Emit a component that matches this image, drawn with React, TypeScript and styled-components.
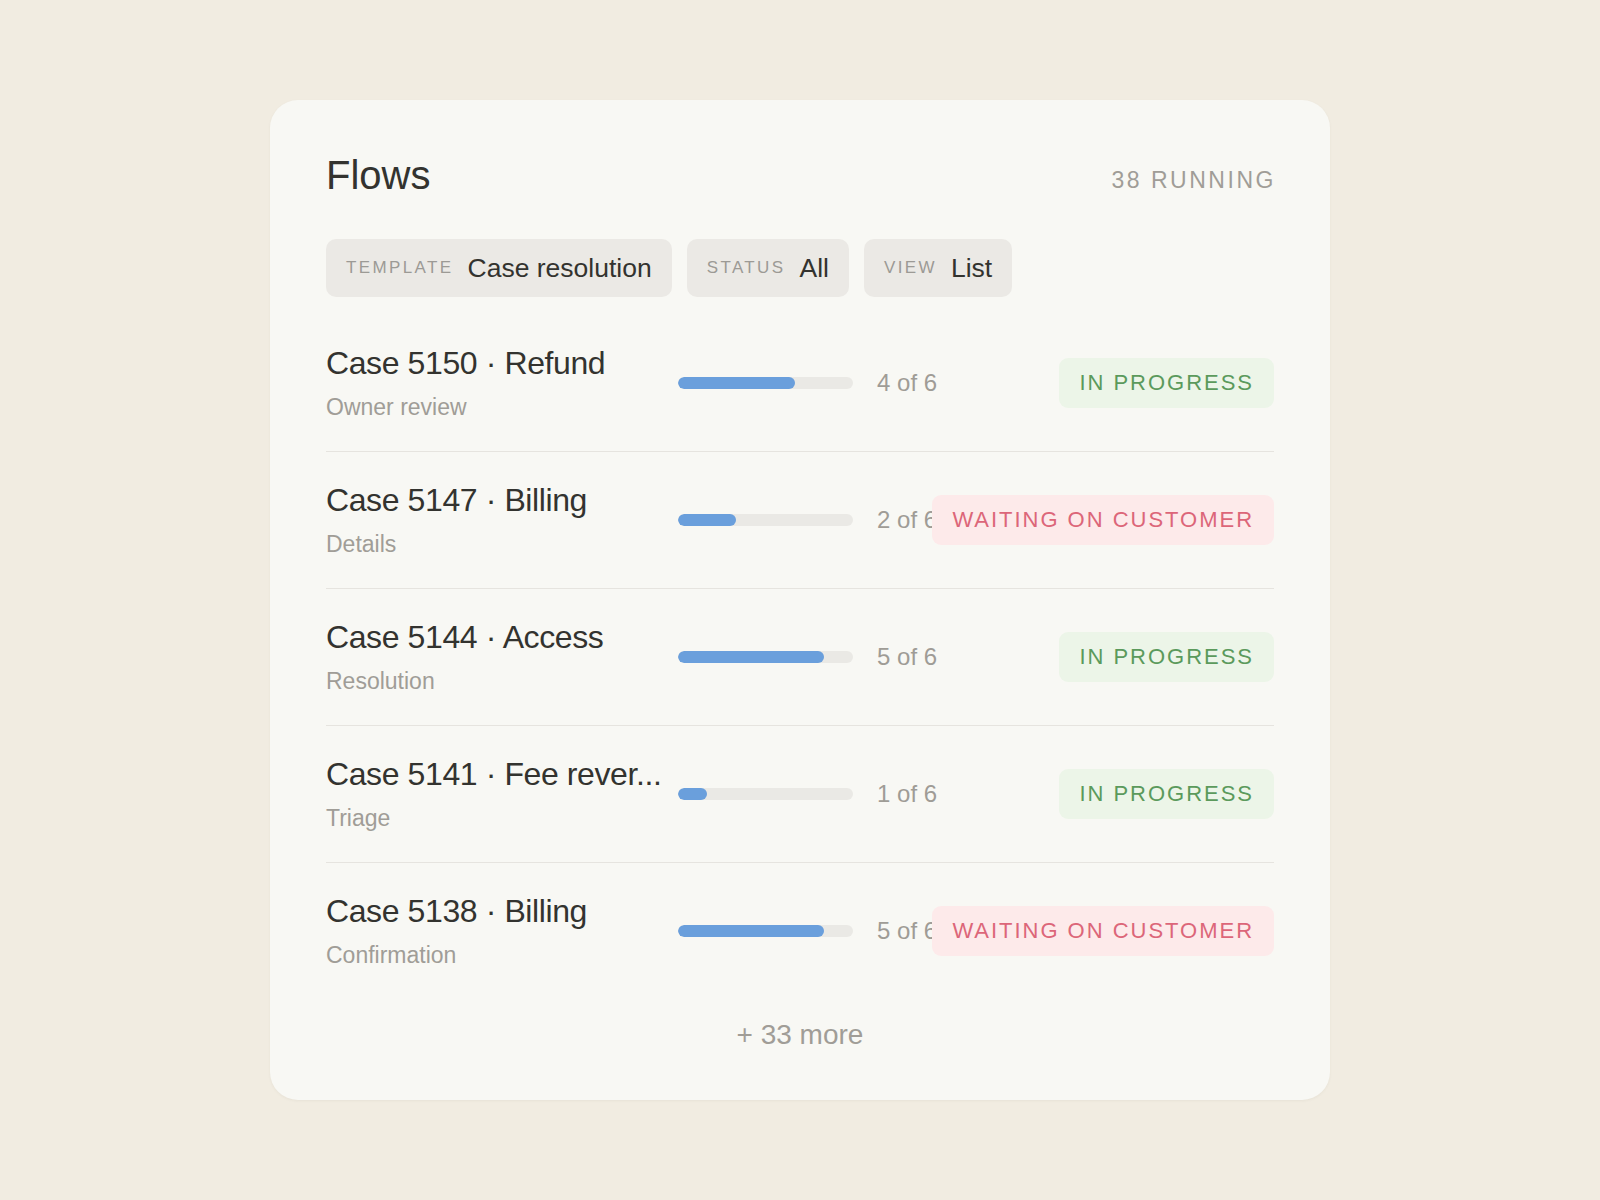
import styled, { createGlobalStyle } from 'styled-components';

const GlobalStyle = createGlobalStyle`
  html, body {
    margin: 0;
    padding: 0;
    background: #f1ece1;
  }
  body {
    font-family: "Liberation Sans", Arial, sans-serif;
    color: #33332f;
  }
`;

type Status = 'progress' | 'waiting';

interface Flow {
  id: number;
  kind: string;
  step: string;
  done: number;
  total: number;
  status: Status;
}

const flows: Flow[] = [
  { id: 5150, kind: 'Refund', step: 'Owner review', done: 4, total: 6, status: 'progress' },
  { id: 5147, kind: 'Billing', step: 'Details', done: 2, total: 6, status: 'waiting' },
  { id: 5144, kind: 'Access', step: 'Resolution', done: 5, total: 6, status: 'progress' },
  { id: 5141, kind: 'Fee reversal', step: 'Triage', done: 1, total: 6, status: 'progress' },
  { id: 5138, kind: 'Billing', step: 'Confirmation', done: 5, total: 6, status: 'waiting' },
];

const filters = [
  { label: 'Template', value: 'Case resolution' },
  { label: 'Status', value: 'All' },
  { label: 'View', value: 'List' },
];

// long case names get cut down to fit the first column
const clip = (text: string, max = 22) => (text.length > max ? `${text.slice(0, max - 1)}...` : text);

const Page = styled.div`
  min-height: 1200px;
  display: flex;
  align-items: center;
  justify-content: center;
`;

const Card = styled.section`
  box-sizing: border-box;
  width: 1060px;
  height: 1000px;
  padding: 51px 56px 50px;
  background: #f8f8f4;
  border-radius: 28px;
  box-shadow: 0 1px 3px rgba(60, 50, 30, 0.05);
  display: flex;
  flex-direction: column;
`;

const Header = styled.header`
  display: flex;
  justify-content: space-between;
  align-items: flex-start;
`;

const Title = styled.h1`
  margin: 0;
  font-size: 40px;
  line-height: 48px;
  font-weight: 400;
  color: #33332f;
`;

const Running = styled.span`
  margin-top: 16px;
  margin-right: -2px;
  font-size: 23px;
  line-height: 26px;
  letter-spacing: 0.11em;
  color: #a09d97;
`;

const FilterBar = styled.div`
  display: flex;
  gap: 15px;
  margin-top: 40px;
  margin-bottom: 18px;
`;

const Pill = styled.button`
  display: flex;
  align-items: center;
  gap: 14px;
  height: 58px;
  padding: 0 20px;
  border: none;
  border-radius: 10px;
  background: #ebe9e5;
  font-family: inherit;
  cursor: pointer;
`;

const PillLabel = styled.span`
  font-size: 17px;
  letter-spacing: 0.14em;
  text-transform: uppercase;
  color: #9c9a95;
`;

const PillValue = styled.span`
  font-size: 26.5px;
  color: #33332f;
`;

const List = styled.ul`
  list-style: none;
  margin: 0;
  padding: 0;
`;

const Row = styled.li`
  display: grid;
  grid-template-columns: 328px 175px minmax(0, 1fr) auto;
  column-gap: 24px;
  align-items: center;
  height: 136px;
  border-bottom: 1px solid #e6e4df;
  &:last-child {
    border-bottom: none;
  }
`;

const Info = styled.div`
  display: flex;
  flex-direction: column;
  gap: 8px;
  min-width: 0;
`;

const CaseName = styled.div`
  font-size: 32px;
  line-height: 40px;
  letter-spacing: -0.4px;
  color: #33332f;
  white-space: nowrap;
`;

const Step = styled.div`
  font-size: 23px;
  line-height: 32px;
  color: #a09d97;
`;

const Track = styled.div`
  height: 12px;
  border-radius: 6px;
  background: #eae9e5;
  overflow: hidden;
`;

const Fill = styled.div`
  height: 100%;
  border-radius: 6px;
  background: #6a9fdc;
`;

const Count = styled.span`
  font-size: 24px;
  color: #9f9c96;
  white-space: nowrap;
`;

const Badge = styled.span<{ $status: Status }>`
  display: flex;
  align-items: center;
  height: 50px;
  padding: 0 20px;
  border-radius: 9px;
  font-size: 22px;
  letter-spacing: 0.09em;
  white-space: nowrap;
  background: ${(p) => (p.$status === 'progress' ? '#ecf5e8' : '#fdeaea')};
  color: ${(p) => (p.$status === 'progress' ? '#5b9a5c' : '#dc6679')};
`;

const More = styled.div`
  margin-top: 19px;
  text-align: center;
  font-size: 28px;
  line-height: 34px;
  color: #a09d97;
`;

const App = () => (
  <>
    <GlobalStyle />
    <Page>
      <Card>
        <Header>
          <Title>Flows</Title>
          <Running>38 RUNNING</Running>
        </Header>

        <FilterBar>
          {filters.map((f) => (
            <Pill key={f.label}>
              <PillLabel>{f.label}</PillLabel>
              <PillValue>{f.value}</PillValue>
            </Pill>
          ))}
        </FilterBar>

        <List>
          {flows.map((flow) => (
            <Row key={flow.id}>
              <Info>
                <CaseName>{clip(`Case ${flow.id} · ${flow.kind}`)}</CaseName>
                <Step>{flow.step}</Step>
              </Info>
              <Track>
                <Fill style={{ width: `${(flow.done / flow.total) * 100}%` }} />
              </Track>
              <Count>
                {flow.done} of {flow.total}
              </Count>
              <Badge $status={flow.status}>
                {flow.status === 'progress' ? 'IN PROGRESS' : 'WAITING ON CUSTOMER'}
              </Badge>
            </Row>
          ))}
        </List>

        <More>+ 33 more</More>
      </Card>
    </Page>
  </>
);

export default App;
